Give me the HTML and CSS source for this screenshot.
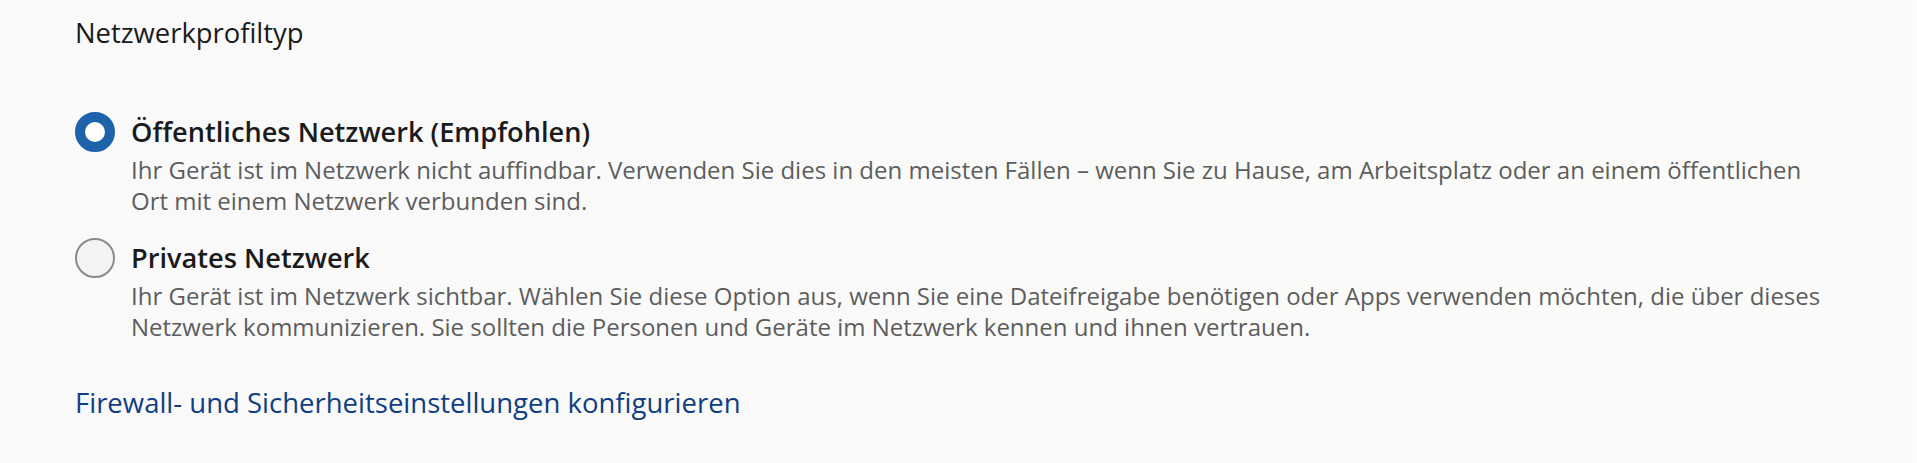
FILE: index.html
```html
<!DOCTYPE html>
<html lang="de">
<head>
<meta charset="utf-8">
<title>Netzwerkprofiltyp</title>
<link rel="stylesheet" href="styles.css">
</head>
<body>
<main class="page">
  <h2 class="title">Netzwerkprofiltyp</h2>
  <div class="options">
    <label class="option">
      <span class="radio radio-checked"></span>
      <span class="option-text">
        <span class="option-head">Öffentliches Netzwerk (Empfohlen)</span>
        <span class="option-desc">Ihr Gerät ist im Netzwerk nicht auffindbar. Verwenden Sie dies in den meisten Fällen – wenn Sie zu Hause, am Arbeitsplatz oder an einem öffentlichen<br>Ort mit einem Netzwerk verbunden sind.</span>
      </span>
    </label>
    <label class="option">
      <span class="radio"></span>
      <span class="option-text">
        <span class="option-head">Privates Netzwerk</span>
        <span class="option-desc">Ihr Gerät ist im Netzwerk sichtbar. Wählen Sie diese Option aus, wenn Sie eine Dateifreigabe benötigen oder Apps verwenden möchten, die über dieses Netzwerk kommunizieren. Sie sollten die Personen und Geräte im Netzwerk kennen und ihnen vertrauen.</span>
      </span>
    </label>
  </div>
  <a class="link" href="#">Firewall- und Sicherheitseinstellungen konfigurieren</a>
</main>
</body>
</html>
```

FILE: styles.css
```css
html, body {
  margin: 0;
  padding: 0;
}
body {
  background: linear-gradient(90deg, #f9f9f9 0%, #fafaf9 60%, #fbfbfa 100%);
  font-family: "Segoe UI", "Open Sans", "Noto Sans", sans-serif;
  color: #1b1b1b;
  width: 1917px;
  height: 463px;
  overflow: hidden;
}
.page {
  padding: 16px 0 0 75px;
  display: flex;
  flex-direction: column;
  align-items: flex-start;
}
.title {
  margin: 0;
  font-size: 27.4px;
  font-weight: 400;
  line-height: 34px;
  color: #1b1b1b;
}
.options {
  margin-top: 62px;
  display: flex;
  flex-direction: column;
  gap: 22px;
}
.option {
  display: flex;
  align-items: flex-start;
  gap: 16px;
}
.radio {
  flex: none;
  box-sizing: border-box;
  width: 40px;
  height: 40px;
  border-radius: 50%;
  border: 2px solid #8a8a8a;
  background: #f3f3f3;
}
.radio-checked {
  border: 10px solid #1d63ab;
  background: #ffffff;
}
.option-text {
  display: flex;
  flex-direction: column;
  padding-top: 4px;
  width: 1740px;
}
.option-head {
  font-size: 27.2px;
  font-weight: 600;
  line-height: 32px;
  color: #1b1b1b;
}
.option-desc {
  margin-top: 6px;
  font-size: 24px;
  line-height: 31px;
  color: #5d5d5d;
}
.link {
  margin-top: 45px;
  font-size: 27.5px;
  line-height: 32px;
  color: #0f3f82;
  text-decoration: none;
}
```
